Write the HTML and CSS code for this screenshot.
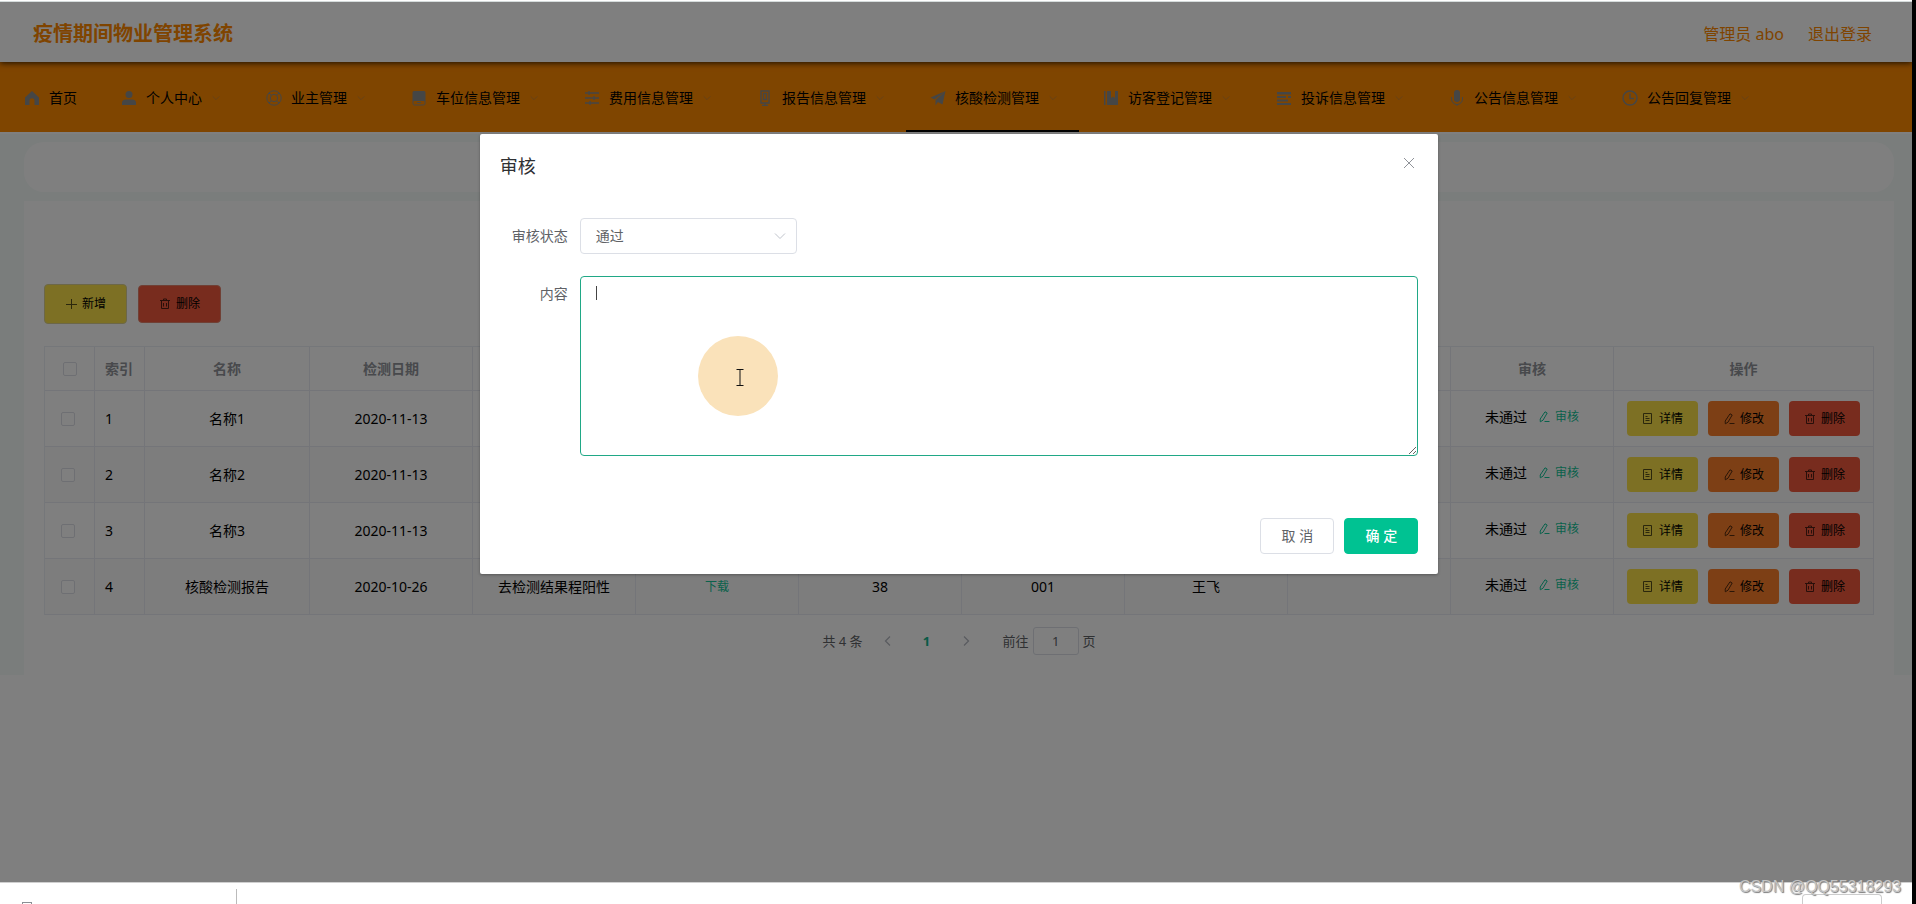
FILE: index.html
```html
<!DOCTYPE html>
<html lang="zh-CN">
<head>
<meta charset="utf-8">
<title>疫情期间物业管理系统</title>
<link rel="stylesheet" href="styles.css">
</head>
<body>
<svg class="sprite" aria-hidden="true">
  <symbol id="i-home" viewBox="0 0 16 16"><path fill="currentColor" d="M8 1 1 7.500V15h4.500v-4.200a2.500 2.500 0 0 1 5 0V15H15V7.500z"/></symbol>
  <symbol id="i-user" viewBox="0 0 16 16"><circle cx="8" cy="4.500" r="3.500" fill="currentColor"/><path fill="currentColor" d="M1 15v-2.500C1 10.500 3 9.500 5 9.500h6c2 0 4 1 4 3V15z"/></symbol>
  <symbol id="i-help" viewBox="0 0 16 16"><circle cx="8" cy="8" r="7.200" fill="none" stroke="currentColor"/><circle cx="8" cy="8" r="3.700" fill="none" stroke="currentColor"/><path stroke="currentColor" d="m3 3 2.400 2.400M13 3l-2.400 2.400M3 13l2.400-2.400M13 13l-2.400-2.400"/></symbol>
  <symbol id="i-goods" viewBox="0 0 16 16"><path fill="currentColor" d="M3 1h10a1.500 1.500 0 0 1 1.500 1.500V11H1.500V2.500A1.500 1.500 0 0 1 3 1z"/><path fill="none" stroke="currentColor" d="M2 11v2.500A1.500 1.500 0 0 0 3.500 15h9a1.500 1.500 0 0 0 1.500-1.500V11M6 12.500h4"/></symbol>
  <symbol id="i-sliders" viewBox="0 0 16 16"><path fill="none" stroke="currentColor" stroke-width="1.400" d="M1 3h14M1 8h14M1 13h14M5 1v4M10 6v4M6 11v4"/></symbol>
  <symbol id="i-phone" viewBox="0 0 16 16"><path fill="none" stroke="currentColor" stroke-width="1.400" d="M4 1h8v12H4zM6.500 3.500h3v6h-3zM8 13v2.500M5 15.500h6"/></symbol>
  <symbol id="i-send" viewBox="0 0 16 16"><path fill="currentColor" d="M15.500 1 .5 7.500l4 2zM15.500 1 5.500 10v5.500l2.400-3.600 4.600 2.600z"/></symbol>
  <symbol id="i-book" viewBox="0 0 16 16"><path fill="currentColor" d="M1 1h1.500v14H1zM4 1h4v7l2-1.500L12 8V1h3v14H4z"/></symbol>
  <symbol id="i-list" viewBox="0 0 16 16"><path fill="currentColor" d="M1 2h14v2.500H1zM1 6h9v2H1zM12 6h3v2h-3zM1 9.500h11v2H1zM1 13h14v2H1z"/></symbol>
  <symbol id="i-mic" viewBox="0 0 16 16"><rect x="5" y="0" width="6" height="12" rx="3" fill="currentColor"/><path fill="none" stroke="currentColor" d="M2.500 7v2a5.500 5.500 0 0 0 11 0V7M8 14v2"/></symbol>
  <symbol id="i-clock" viewBox="0 0 16 16"><circle cx="8" cy="8" r="7" fill="none" stroke="currentColor" stroke-width="1.400"/><path fill="none" stroke="currentColor" stroke-width="1.400" d="M8 3.500V8.500h4"/></symbol>
  <symbol id="i-down" viewBox="0 0 12 12"><path fill="none" stroke="currentColor" d="m1 3.500 5 5 5-5"/></symbol>
  <symbol id="i-left" viewBox="0 0 12 12"><path fill="none" stroke="currentColor" stroke-width="1.300" d="M8 1.500 3.500 6 8 10.500"/></symbol>
  <symbol id="i-right" viewBox="0 0 12 12"><path fill="none" stroke="currentColor" stroke-width="1.300" d="M4 1.500 8.500 6 4 10.500"/></symbol>
  <symbol id="i-close" viewBox="0 0 12 12"><path stroke="currentColor" d="m1 1 10 10M11 1 1 11"/></symbol>
  <symbol id="i-plus" viewBox="0 0 12 12"><path stroke="currentColor" d="M6.500 1v10M1 6.500h11"/></symbol>
  <symbol id="i-trash" viewBox="0 0 12 12"><path fill="none" stroke="currentColor" d="M1 2.500h10M4.500 2.500v-1.500h3v1.500M2.500 2.500v8h7v-8M4.500 5v3.500M7.500 5v3.500"/></symbol>
  <symbol id="i-doc" viewBox="0 0 12 12"><path fill="none" stroke="currentColor" d="M1.500.5h8v10h-8zM3.500 3.500h2M3.500 5.500h4M3.500 7.500h4"/></symbol>
  <symbol id="i-edit" viewBox="0 0 12 12"><path fill="none" stroke="currentColor" d="M7 .8 9.200 2 5 9.200l-2.700 1.600L2.200 8zM6.500 10.500h5"/></symbol>
</svg>

<div class="stage">
  <header class="header">
    <h1 class="brand">疫情期间物业管理系统</h1>
    <div class="account"><span>管理员 abo</span><a class="logout" href="#">退出登录</a></div>
  </header>
  <nav class="nav">
    <a class="nav-item" href="#"><svg class="nav-icon"><use href="#i-home"/></svg>首页</a>
    <a class="nav-item" href="#"><svg class="nav-icon"><use href="#i-user"/></svg>个人中心<svg class="nav-arrow"><use href="#i-down"/></svg></a>
    <a class="nav-item" href="#"><svg class="nav-icon"><use href="#i-help"/></svg>业主管理<svg class="nav-arrow"><use href="#i-down"/></svg></a>
    <a class="nav-item" href="#"><svg class="nav-icon"><use href="#i-goods"/></svg>车位信息管理<svg class="nav-arrow"><use href="#i-down"/></svg></a>
    <a class="nav-item" href="#"><svg class="nav-icon"><use href="#i-sliders"/></svg>费用信息管理<svg class="nav-arrow"><use href="#i-down"/></svg></a>
    <a class="nav-item" href="#"><svg class="nav-icon"><use href="#i-phone"/></svg>报告信息管理<svg class="nav-arrow"><use href="#i-down"/></svg></a>
    <a class="nav-item active" href="#"><svg class="nav-icon"><use href="#i-send"/></svg>核酸检测管理<svg class="nav-arrow"><use href="#i-down"/></svg></a>
    <a class="nav-item" href="#"><svg class="nav-icon"><use href="#i-book"/></svg>访客登记管理<svg class="nav-arrow"><use href="#i-down"/></svg></a>
    <a class="nav-item" href="#"><svg class="nav-icon"><use href="#i-list"/></svg>投诉信息管理<svg class="nav-arrow"><use href="#i-down"/></svg></a>
    <a class="nav-item" href="#"><svg class="nav-icon"><use href="#i-mic"/></svg>公告信息管理<svg class="nav-arrow"><use href="#i-down"/></svg></a>
    <a class="nav-item" href="#"><svg class="nav-icon"><use href="#i-clock"/></svg>公告回复管理<svg class="nav-arrow"><use href="#i-down"/></svg></a>
  </nav>
  <main class="main">
    <div class="crumbs"></div>
    <section class="panel">
      <div class="toolbar">
        <button class="tool yellow" type="button"><svg class="ico"><use href="#i-plus"/></svg>新增</button>
        <button class="tool red" type="button"><svg class="ico"><use href="#i-trash"/></svg>删除</button>
      </div>
      <table class="grid">
        <colgroup><col class="c-small"><col class="c-small"><col class="c-name"><col><col><col><col><col><col><col><col><col class="c-ops"></colgroup>
        <thead>
          <tr><th class="pick-all"><input type="checkbox" aria-label="全选"></th><th class="idx">索引</th><th>名称</th><th>检测日期</th><th></th><th></th><th></th><th></th><th></th><th></th><th>审核</th><th>操作</th></tr>
        </thead>
        <tbody>
          <tr><td class="pick"><input type="checkbox" aria-label="选择1"></td><td class="idx">1</td><td>名称1</td><td>2020-11-13</td><td></td><td></td><td></td><td></td><td></td><td></td>
            <td><div class="review">未通过<button class="text-btn" type="button"><svg class="ico"><use href="#i-edit"/></svg>审核</button></div></td>
            <td><div class="ops"><button class="op yellow" type="button"><svg class="ico"><use href="#i-doc"/></svg>详情</button><button class="op orange" type="button"><svg class="ico"><use href="#i-edit"/></svg>修改</button><button class="op red" type="button"><svg class="ico"><use href="#i-trash"/></svg>删除</button></div></td></tr>
          <tr><td class="pick"><input type="checkbox" aria-label="选择2"></td><td class="idx">2</td><td>名称2</td><td>2020-11-13</td><td></td><td></td><td></td><td></td><td></td><td></td>
            <td><div class="review">未通过<button class="text-btn" type="button"><svg class="ico"><use href="#i-edit"/></svg>审核</button></div></td>
            <td><div class="ops"><button class="op yellow" type="button"><svg class="ico"><use href="#i-doc"/></svg>详情</button><button class="op orange" type="button"><svg class="ico"><use href="#i-edit"/></svg>修改</button><button class="op red" type="button"><svg class="ico"><use href="#i-trash"/></svg>删除</button></div></td></tr>
          <tr><td class="pick"><input type="checkbox" aria-label="选择3"></td><td class="idx">3</td><td>名称3</td><td>2020-11-13</td><td></td><td></td><td></td><td></td><td></td><td></td>
            <td><div class="review">未通过<button class="text-btn" type="button"><svg class="ico"><use href="#i-edit"/></svg>审核</button></div></td>
            <td><div class="ops"><button class="op yellow" type="button"><svg class="ico"><use href="#i-doc"/></svg>详情</button><button class="op orange" type="button"><svg class="ico"><use href="#i-edit"/></svg>修改</button><button class="op red" type="button"><svg class="ico"><use href="#i-trash"/></svg>删除</button></div></td></tr>
          <tr><td class="pick"><input type="checkbox" aria-label="选择4"></td><td class="idx">4</td><td>核酸检测报告</td><td>2020-10-26</td><td>去检测结果程阳性</td><td><button class="text-btn" type="button">下载</button></td><td>38</td><td>001</td><td>王飞</td><td></td>
            <td><div class="review">未通过<button class="text-btn" type="button"><svg class="ico"><use href="#i-edit"/></svg>审核</button></div></td>
            <td><div class="ops"><button class="op yellow" type="button"><svg class="ico"><use href="#i-doc"/></svg>详情</button><button class="op orange" type="button"><svg class="ico"><use href="#i-edit"/></svg>修改</button><button class="op red" type="button"><svg class="ico"><use href="#i-trash"/></svg>删除</button></div></td></tr>
        </tbody>
      </table>
      <div class="pager">
        <span>共 4 条</span>
        <div class="pages">
          <button class="page-btn" type="button" aria-label="上一页"><svg class="ico"><use href="#i-left"/></svg></button>
          <button class="page-btn current" type="button">1</button>
          <button class="page-btn" type="button" aria-label="下一页"><svg class="ico"><use href="#i-right"/></svg></button>
        </div>
        <label class="jump">前往<input class="jump-input" type="text" value="1">页</label>
      </div>
    </section>
  </main>

  <div class="overlay">
    <div class="dialog" role="dialog" aria-labelledby="dialog-title">
      <div class="dialog-head">
        <h2 class="dialog-title" id="dialog-title">审核</h2>
        <button class="close" type="button" aria-label="关闭"><svg class="ico"><use href="#i-close"/></svg></button>
      </div>
      <form class="form">
        <div class="field">
          <label class="label" for="status">审核状态</label>
          <div class="select-wrap">
            <select class="select" id="status"><option>通过</option><option>未通过</option></select>
            <svg class="select-arrow"><use href="#i-down"/></svg>
          </div>
        </div>
        <div class="field">
          <label class="label" for="content">内容</label>
          <div class="area-wrap">
            <textarea class="area" id="content"></textarea>
            <span class="caret"></span>
            <span class="pointer"><svg class="ibeam" viewBox="0 0 8 17"><path fill="none" stroke="#111" d="M.5.5h7M.5 16.500h7M4 .5v16"/></svg></span>
          </div>
        </div>
      </form>
      <div class="dialog-foot">
        <button class="btn" type="button">取 消</button>
        <button class="btn primary" type="button">确 定</button>
      </div>
    </div>
  </div>
</div>

<footer class="bottom-bar">
  <span class="file-mark"></span>
  <span class="divider"></span>
  <span class="show-all"></span>
  <span class="watermark">CSDN @QQ55318293</span>
</footer>
</body>
</html>
```
FILE: styles.css
```css
* { box-sizing: border-box; }

body {
  margin: 0;
  height: 100vh;
  display: flex;
  flex-direction: column;
  border-right: 4px solid #000;
  overflow: hidden;
  background: #fff;
  color: #000;
  font: 14px/20px "Noto Sans", "Noto Sans CJK SC", sans-serif;
}

button, input, select, textarea { font: inherit; color: inherit; margin: 0; }
button { cursor: pointer; border: 0; background: none; padding: 0; }
a { color: inherit; text-decoration: none; }
.sprite { display: none; }
.ico { width: 12px; height: 12px; flex: none; }

.stage {
  position: relative;
  flex: 1;
  min-height: 0;
  overflow: hidden;
  margin-top: 2px;
  box-shadow: 0 -1px #d5dcdc;
}

.header {
  position: relative;
  z-index: 1;
  height: 60px;
  padding: 3px 40px 0 33px;
  display: flex;
  align-items: center;
  justify-content: space-between;
  background: #fff;
  color: #ff8800;
  box-shadow: 0 1px 6px rgba(0, 0, 0, 0.8);
}
.brand { margin: 0; font-size: 20px; line-height: 28px; font-weight: 700; }
.account { display: flex; gap: 24px; font-size: 16px; line-height: 24px; }

.nav { height: 70px; display: flex; background: #ff8a00; }
.nav-item {
  display: flex;
  align-items: center;
  padding: 4px 20px 0;
  border-bottom: 2px solid transparent;
  white-space: nowrap;
}
.nav-item.active { border-bottom-color: #000; }
.nav-icon { width: 16px; height: 16px; margin: 0 9px 0 4px; color: #8a8c8c; }
.nav-arrow { width: 8px; height: 8px; margin: 0 2px 0 10px; color: #b58246; }

.main {
  margin-top: 2px;
  padding: 8px 18px 0 24px;
  background: #f5fbf9;
  display: flex;
  flex-direction: column;
  gap: 9px;
}
.crumbs { height: 50px; border-radius: 20px; background: #fff; }
.panel { padding: 83px 20px 20px; background: #fff; }

.toolbar { display: flex; align-items: center; gap: 11px; margin-bottom: 22px; }
.tool {
  display: flex;
  align-items: center;
  gap: 5px;
  height: 40px;
  padding: 0 20px;
  border-radius: 4px;
  border: 1px solid #d8cf90;
  font-size: 12px;
}
.tool.red { height: 38px; border-color: #e0806a; }
.yellow { background: #fae148; }
.orange { background: #fa7f2b; }
.red { background: #f0593d; }
.tool .ico, .op .ico { opacity: 0.65; }

.grid {
  width: 100%;
  table-layout: fixed;
  border-collapse: separate;
  border-spacing: 0;
  border-top: 1px solid #ebeef5;
  border-left: 1px solid #ebeef5;
}
.c-small { width: 50px; }
.c-name { width: 165px; }
.c-ops { width: 260px; }
.grid th, .grid td {
  padding: 0 10px;
  text-align: center;
  border-right: 1px solid #e8ebf3;
  border-bottom: 1px solid #e8ebf3;
}
.grid th { height: 44px; color: #909399; font-weight: 700; }
.grid td { height: 56px; }
.grid tbody tr:nth-child(even) { background: #fafafa; }
.grid .idx { text-align: left; padding-right: 0; white-space: nowrap; }
.grid .pick { padding-right: 14px; }
.grid input {
  appearance: none;
  display: block;
  width: 14px;
  height: 14px;
  margin: 0 auto;
  border: 1px solid #dcdfe6;
  border-radius: 2px;
  background: #fff;
}

.review { display: flex; align-items: center; justify-content: center; gap: 11px; padding-bottom: 3px; }
.text-btn {
  display: inline-flex;
  align-items: center;
  gap: 5px;
  color: #12c498;
  font-size: 12px;
}
.ops { display: flex; justify-content: center; gap: 10px; margin: 0 -10px; }
.op {
  display: flex;
  align-items: center;
  justify-content: center;
  gap: 5px;
  width: 71px;
  height: 35px;
  border-radius: 4px;
  font-size: 12px;
}

.pager {
  display: flex;
  align-items: center;
  justify-content: center;
  margin-top: 12px;
  font-size: 13px;
  line-height: 28px;
  color: #606266;
}
.pages { display: flex; gap: 3px; margin: 0 19px 0 7px; }
.page-btn {
  display: flex;
  align-items: center;
  justify-content: center;
  width: 36px;
  height: 28px;
  color: #b4b8c0;
}
.page-btn.current { color: #12b48c; font-weight: 700; }
.jump { display: flex; align-items: center; gap: 4px; }
.jump-input {
  width: 46px;
  height: 28px;
  padding: 0;
  text-align: center;
  border: 1px solid #dcdfe6;
  border-radius: 3px;
  background: #fff;
}

.overlay {
  position: absolute;
  inset: 0;
  z-index: 2;
  padding-left: 6px;
  background: rgba(0, 0, 0, 0.5);
}
.dialog {
  width: 50.3%;
  margin: 132px auto 0;
  padding: 0 20px 20px;
  border-radius: 2px;
  background: #fff;
  box-shadow: 0 1px 3px rgba(0, 0, 0, 0.3);
}
.dialog-head { display: flex; justify-content: space-between; padding: 20px 0 10px; }
.dialog-title { margin: 0; font-size: 18px; line-height: 24px; font-weight: 400; color: #303133; }
.close { height: 16px; padding: 0 3px; color: #909399; }
.form { display: flex; flex-direction: column; gap: 22px; padding: 30px 0 62px; }
.field { display: flex; color: #606266; }
.label { width: 80px; padding-right: 12px; text-align: right; line-height: 36px; }
.select-wrap { position: relative; width: 217px; }
.select {
  appearance: none;
  display: block;
  width: 100%;
  height: 36px;
  padding: 0 30px 0 15px;
  border: 1px solid #dcdfe6;
  border-radius: 4px;
  background: #fff;
}
.select-arrow {
  position: absolute;
  right: 11px;
  top: 12px;
  width: 12px;
  height: 12px;
  color: #c0c4cc;
  pointer-events: none;
}
.area-wrap { position: relative; flex: 1; }
.area {
  display: block;
  width: 100%;
  height: 180px;
  padding: 5px 15px;
  border: 1px solid #20a886;
  border-radius: 4px;
  outline: 0;
  resize: vertical;
}
.caret { position: absolute; left: 16px; top: 10px; width: 1px; height: 14px; background: #444; }
.pointer {
  position: absolute;
  left: 118px;
  top: 60px;
  width: 80px;
  height: 80px;
  display: flex;
  align-items: center;
  justify-content: center;
  padding: 2px 0 0 5px;
  border-radius: 50%;
  background: #fae2ba;
}
.ibeam { width: 8px; height: 17px; }

.dialog-foot { display: flex; justify-content: flex-end; gap: 10px; }
.btn {
  width: 74px;
  height: 36px;
  border: 1px solid #dcdfe6;
  border-radius: 4px;
  background: #fff;
  color: #606266;
}
.btn.primary { border-color: #00c292; background: #00c292; color: #fff; font-weight: 500; }

.bottom-bar {
  position: relative;
  height: 22px;
  display: flex;
  align-items: flex-end;
  border-top: 1px solid #cfcfcf;
  background: #fff;
}
.file-mark { width: 10px; height: 2px; margin-left: 22px; border: 1px solid #8a8f94; border-bottom: 0; }
.divider { width: 1px; height: 15px; margin-left: 204px; background: #bbb; }
.show-all {
  width: 80px;
  height: 10px;
  margin: 0 30px 0 auto;
  border: 1px solid #ccc;
  border-bottom: 0;
  border-radius: 4px 4px 0 0;
}
.watermark {
  position: absolute;
  z-index: 3;
  right: 11px;
  top: -6px;
  font: 16px/20px "Liberation Sans", Arial, sans-serif;
  color: #c4c4c4;
  text-shadow: 1px 1px 1px #777;
}
```
